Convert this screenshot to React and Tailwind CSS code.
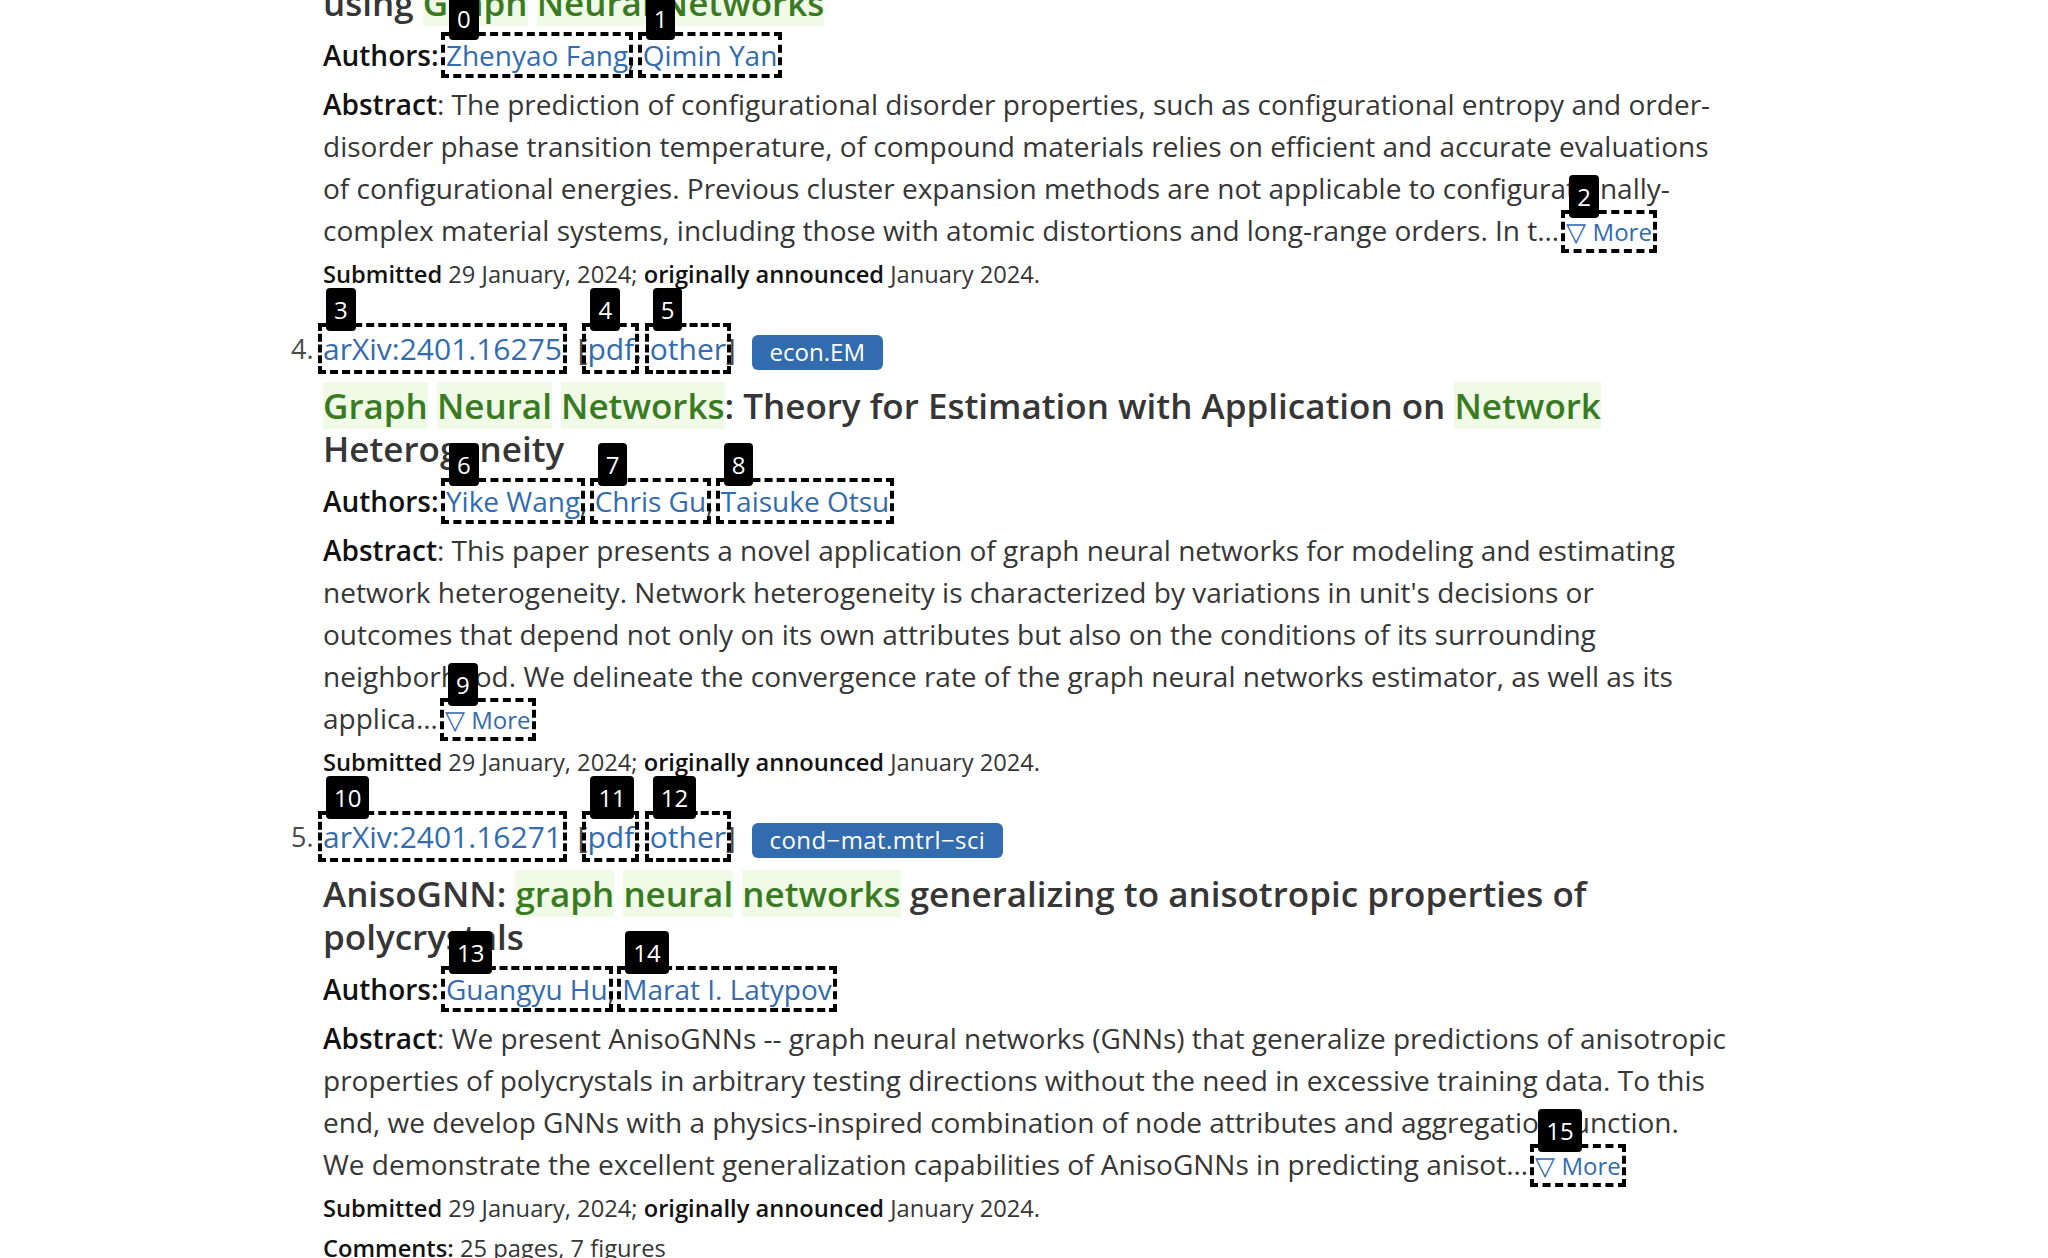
import React from "react";

const LINK = "text-[#336baf]";

function Box({ n, size, inset, children }) {
  return (
    <span className={"relative " + size}>
      <a className={LINK}>{children}</a>
      <span className={"pointer-events-none absolute -inset-x-[5px] border-[4px] border-dashed border-black " + inset}>
        <span className="absolute left-[4px] -top-[39px] flex h-[43px] items-center rounded-[4px] bg-black px-[8px] font-['Open_Sans',sans-serif] text-[24px] font-normal leading-none text-white">
          {n}
        </span>
      </span>
    </span>
  );
}

function A({ n, children }) {
  return (
    <Box n={n} size="text-[28px]" inset="-inset-y-[4px]">
      {children}
    </Box>
  );
}

function Hit({ children }) {
  return <span className="bg-[#effbe7] text-[#3a7a23]">{children}</span>;
}

function Label({ children }) {
  return <span className="font-semibold text-[#121212]">{children}</span>;
}

function Header({ num, id, pdfN, otherN, idN, tag, tagClass }) {
  return (
    <li className="flex h-[48px] items-center">
      <span className="w-0 whitespace-nowrap">
        <span className="relative -left-[32px] text-[27px] text-[#4a4a4a]">{num}.</span>
      </span>
      <span className="whitespace-nowrap text-[30px] leading-[40px]">
        <Box n={idN} size="text-[30px]" inset="-inset-y-[5px]">{id}</Box>
        <span className="text-[#4a4a4a]">
          {" \u00a0["}
          <Box n={pdfN} size="text-[30px]" inset="-inset-y-[5px]">pdf</Box>
          {", "}
          <Box n={otherN} size="text-[30px]" inset="-inset-y-[5px]">other</Box>
          {"]\u00a0"}
        </span>
      </span>
      <span className={"ml-[8px] mt-[6px] flex h-[35px] items-center rounded-[6px] bg-[#336baf] px-[18px] text-[24px] text-white " + tagClass}>
        {tag}
      </span>
    </li>
  );
}

function More({ n }) {
  return (
    <Box n={n} size="text-[24px]" inset="-inset-y-[5px]">
      <span className="text-[26px]">{"\u25BD"}</span> More
    </Box>
  );
}

function Submitted() {
  return (
    <p className="mt-[6px] text-[23.7px] leading-[30px] text-[#363636]">
      <Label>Submitted</Label> 29 January, 2024; <Label>originally announced</Label> January 2024.
    </p>
  );
}

const TITLE = "text-[35px] font-semibold leading-[43px] text-[#363636]";
const AUTH = "mt-[10px] text-[28px] leading-[42px]";
const ABS = "mt-[7px] text-[28px] leading-[42px]";

export default function App() {
  return (
    <div className="min-h-screen w-full bg-white font-['Open_Sans','Noto_Sans',sans-serif] text-[#363636]">
      <div className="-mt-[19px] ml-[323px] w-[1420px]">
        {/* entry 3 (partial) */}
        <div>
          <p className={TITLE}>
            using <Hit>Graph</Hit> <Hit>Neural</Hit> <Hit>Networks</Hit>
          </p>
          <p className={AUTH}>
            <Label>Authors:</Label> <A n={0}>Zhenyao Fang</A>, <A n={1}>Qimin Yan</A>
          </p>
          <p className={ABS}>
            <Label>Abstract</Label>: The prediction of configurational disorder properties, such as configurational entropy and order-
            <br />
            disorder phase transition temperature, of compound materials relies on efficient and accurate evaluations
            <br />
            of configurational energies. Previous cluster expansion methods are not applicable to configurationally-
            <br />
            complex material systems, including those with atomic distortions and long-range orders. In t{"\u2026"}{" "}
            <More n={2} />
          </p>
          <Submitted />
        </div>

        {/* entry 4 */}
        <ol className="mt-[36px]">
          <Header num={4} id="arXiv:2401.16275" idN={3} pdfN={4} otherN={5} tag="econ.EM" tagClass="" />
          <p className={"mt-[11px] " + TITLE}>
            <Hit>Graph</Hit> <Hit>Neural</Hit> <Hit>Networks</Hit>: Theory for Estimation with Application on <Hit>Network</Hit> Heterogeneity
          </p>
          <p className={AUTH}>
            <Label>Authors:</Label> <A n={6}>Yike Wang</A>, <A n={7}>Chris Gu</A>, <A n={8}>Taisuke Otsu</A>
          </p>
          <p className={ABS}>
            <Label>Abstract</Label>: This paper presents a novel application of graph neural networks for modeling and estimating
            <br />
            network heterogeneity. Network heterogeneity is characterized by variations in unit's decisions or
            <br />
            outcomes that depend not only on its own attributes but also on the conditions of its surrounding
            <br />
            neighborhood. We delineate the convergence rate of the graph neural networks estimator, as well as its
            <br />
            applica{"\u2026"}{" "}
            <More n={9} />
          </p>
          <Submitted />
        </ol>

        {/* entry 5 */}
        <ol className="mt-[36px]">
          <Header num={5} id="arXiv:2401.16271" idN={10} pdfN={11} otherN={12} tag="cond−mat.mtrl−sci" tagClass="tracking-[0.4px]" />
          <p className={"mt-[11px] " + TITLE}>
            AnisoGNN: <Hit>graph</Hit> <Hit>neural</Hit> <Hit>networks</Hit> generalizing to anisotropic properties of polycrystals
          </p>
          <p className={AUTH}>
            <Label>Authors:</Label> <A n={13}>Guangyu Hu</A>, <A n={14}>Marat I. Latypov</A>
          </p>
          <p className={ABS}>
            <Label>Abstract</Label>: We present AnisoGNNs -- graph neural networks (GNNs) that generalize predictions of anisotropic
            <br />
            properties of polycrystals in arbitrary testing directions without the need in excessive training data. To this
            <br />
            end, we develop GNNs with a physics-inspired combination of node attributes and aggregation function.
            <br />
            We demonstrate the excellent generalization capabilities of AnisoGNNs in predicting anisot{"\u2026"}{" "}
            <More n={15} />
          </p>
          <Submitted />
          <p className="mt-[10px] text-[23.7px] leading-[30px] text-[#363636]">
            <Label>Comments:</Label> 25 pages, 7 figures
          </p>
        </ol>
      </div>
    </div>
  );
}
